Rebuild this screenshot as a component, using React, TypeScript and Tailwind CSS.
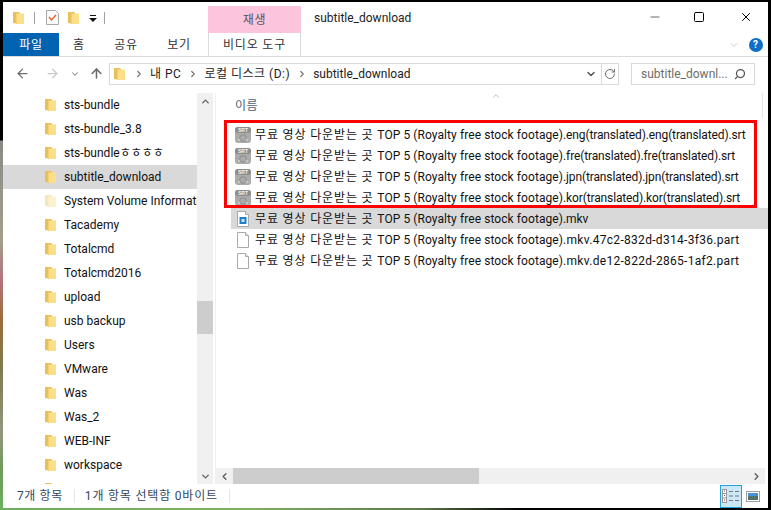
import { ChevronDown, ChevronUp, ArrowLeft, ArrowRight, ArrowUp, ChevronRight, ChevronLeft, RotateCw, Search, Minus, X, Square } from "lucide-react";

const font = "font-['Roboto','Noto_Sans_CJK_KR',sans-serif]";

const folders = [
  "sts-bundle",
  "sts-bundle_3.8",
  "sts-bundleㅎㅎㅎㅎ",
  "subtitle_download",
  "System Volume Information",
  "Tacademy",
  "Totalcmd",
  "Totalcmd2016",
  "upload",
  "usb backup",
  "Users",
  "VMware",
  "Was",
  "Was_2",
  "WEB-INF",
  "workspace",
];

const base = "TOP 5 (Royalty free stock footage)";

const srtFiles = [
  `.eng(translated).eng(translated).srt`,
  `.fre(translated).fre(translated).srt`,
  `.jpn(translated).jpn(translated).srt`,
  `.kor(translated).kor(translated).srt`,
];

function Folder({ faded = false }: { faded?: boolean }) {
  return (
    <svg width="11" height="14" viewBox="0 0 11 14" className={`shrink-0 ${faded ? "opacity-40" : ""}`}>
      <path d="M0 1h6l1 1v11l-7-1z" fill="#e8bf58" />
      <path d="M3 2.5h8V13H3z" fill="#fbdf8b" />
      <path d="M3 2.5h1V13H3z" fill="#f6cf6c" />
    </svg>
  );
}

function SrtIcon() {
  return (
    <svg width="16" height="16" viewBox="0 0 16 16" className="shrink-0">
      <rect x="0" y="0" width="16" height="16" rx="3" fill="#ababab" />
      <rect x="0" y="0" width="16" height="6" rx="3" fill="#8c8c8c" />
      <text x="8" y="5" textAnchor="middle" fontSize="5" fontWeight="700" fill="#f4f4f4" fontFamily="Liberation Sans">
        SRT
      </text>
      <circle cx="8" cy="11" r="3.2" fill="none" stroke="#939393" strokeWidth="1.2" />
      <circle cx="4" cy="13" r="1.3" fill="#c4c4c4" />
      <circle cx="12" cy="13" r="1.3" fill="#c4c4c4" />
    </svg>
  );
}

function BlankFile({ video = false }: { video?: boolean }) {
  return (
    <svg width="12" height="16" viewBox="0 0 12 16" className="shrink-0">
      <path d="M.5.5h8l3 3v12H.5z" fill="#fff" stroke="#a9a9a9" />
      <path d="M8.5.5v3h3" fill="#eee" stroke="#a9a9a9" />
      {video && <rect x="2.5" y="6" width="7" height="7" fill="#1e7fd0" />}
      {video && <rect x="4.5" y="8" width="3" height="3" fill="#cfe6f8" />}
    </svg>
  );
}

function FileRow({ tail, icon, wide = false, selected = false }: { tail: string; icon: React.ReactNode; wide?: boolean; selected?: boolean }) {
  return (
    <div className={`flex h-[21px] items-center whitespace-nowrap pl-[2px] ${selected ? "bg-[#d9d9d9]" : ""}`}>
      <span className="flex w-[20px] justify-center">{icon}</span>
      <span className="ml-[2px] text-[12px] text-[#111]">
        <span className="tracking-[0.85px]">무료 영상 다운받는 곳 </span>
        <span className="tracking-[0.08px]">{base}</span>
        <span className={wide ? "tracking-[0.3px]" : "tracking-[-0.13px]"}>{tail}</span>
      </span>
    </div>
  );
}

export default function App() {
  return (
    <div className={`flex h-[510px] w-[771px] flex-col overflow-hidden bg-black ${font}`}>
      <div className="flex min-h-0 flex-1">
        <div className="w-[3px] shrink-0 bg-[linear-gradient(to_bottom,#000_0,#000_140px,#8a8a86_141px,#a39f8c_240px,#b2747c_280px,#9b6c3a_320px,#7f7a50_370px,#93967e_430px,#6f9a5c_470px,#6db060_508px)]" />
        <div className="mt-[2px] flex min-w-0 flex-1 flex-col bg-white">
          {/* Title bar */}
          <div className="flex h-[31px] shrink-0 items-end">
            <div className="flex h-[31px] w-[205px] items-center">
              <span className="ml-[10px]">
                <Folder />
              </span>
              <span className="ml-[10px] h-[12px] w-px bg-[#a0a0a0]" />
              <svg width="13" height="15" viewBox="0 0 13 15" className="ml-[11px]">
                <path d="M.5.5h9l3 3v11H.5z" fill="#fafafa" stroke="#a8a8a8" />
                <path d="M3 7l2.5 3L10 5" fill="none" stroke="#e8622a" strokeWidth="1.4" />
              </svg>
              <span className="ml-[9px]">
                <Folder />
              </span>
              <svg width="9" height="8" viewBox="0 0 9 8" className="ml-[10px] mt-[2px]">
                <path d="M1 0h6v1H1zM0 3h8L4 7z" fill="#111" />
              </svg>
              <span className="ml-[6px] h-[12px] w-px bg-[#a0a0a0]" />
            </div>
            <div className="flex h-[27px] w-[93px] items-center justify-center bg-[#fdc4dd] text-[12px] tracking-[0.8px] text-[#555]">재생</div>
            <div className="flex h-[31px] flex-1 items-center pl-[13px] text-[12px] text-[#222]">subtitle_download</div>
            <div className="flex h-[31px] items-center pb-[1px]">
              <Minus size={14} strokeWidth={1} className="mr-[31px] text-black" />
              <Square size={12} strokeWidth={1} absoluteStrokeWidth className="mr-[34px] text-black" />
              <X size={14} strokeWidth={1} absoluteStrokeWidth className="mr-[15px] text-black" />
            </div>
          </div>
          {/* Ribbon tabs */}
          <div className="flex h-[24px] shrink-0 border-b border-[#dadbdc] text-[12px] tracking-[0.8px] text-[#333]">
            <div className="flex h-[23px] w-[56px] items-center justify-center bg-[#0063b1] text-white">파일</div>
            <div className="flex w-[40px] items-center justify-center">홈</div>
            <div className="flex w-[54px] items-center justify-center">공유</div>
            <div className="mr-[3px] flex w-[52px] items-center justify-center">보기</div>
            <div className="flex h-[23px] w-[93px] items-center justify-center border-x border-[#dadbdc]">비디오 도구</div>
            <div className="flex flex-1 items-center justify-end gap-[9px] pr-[5px]">
              <ChevronDown size={12} strokeWidth={1} className="text-[#9a9a9a]" />
              <span className="flex h-[14px] w-[14px] items-center justify-center rounded-full bg-[#0f6fc6] text-[10px] font-bold text-white">?</span>
            </div>
          </div>
          {/* Navigation row */}
          <div className="flex h-[33px] shrink-0 items-center text-[12px]">
            <ArrowLeft size={15} strokeWidth={2} className="ml-[12px] text-[#6d6d6d]" />
            <ArrowRight size={15} strokeWidth={2} className="ml-[15px] text-[#c9c9c9]" />
            <ChevronDown size={10} strokeWidth={2.5} className="ml-[10px] text-[#8a8a8a]" />
            <ArrowUp size={15} strokeWidth={2.5} className="ml-[9px] text-[#6d6d6d]" />
            <div className="ml-[5px] flex h-[22px] w-[510px] items-center border border-[#d9d9d9]">
              <span className="ml-[4px]">
                <Folder />
              </span>
              <ChevronRight size={10} strokeWidth={3} className="ml-[9px] text-[#777]" />
              <span className="ml-[6px] tracking-[0.5px] text-[#222]">내 PC</span>
              <ChevronRight size={10} strokeWidth={3} className="ml-[7px] text-[#777]" />
              <span className="ml-[6px] tracking-[0.5px] text-[#222]">로컬 디스크 (D:)</span>
              <ChevronRight size={10} strokeWidth={3} className="ml-[7px] text-[#777]" />
              <span className="ml-[6px] text-[#222]">subtitle_download</span>
              <ChevronDown size={12} strokeWidth={3} className="ml-auto mr-[4px] text-[#555]" />
              <span className="flex h-full w-[17px] items-center justify-center border-l border-[#d9d9d9]">
                <RotateCw size={12} strokeWidth={2} className="text-[#6d6d6d]" />
              </span>
            </div>
            <div className="ml-[12px] flex h-[22px] w-[124px] items-center border border-[#d9d9d9] pl-[9px] text-[#6d6d6d]">
              <span>subtitle_downl...</span>
              <Search size={12} strokeWidth={2.5} className="ml-auto mr-[8px] -scale-x-100 text-[#555]" />
            </div>
          </div>
          {/* Main */}
          <div className="flex min-h-0 flex-1 pt-[3px]">
            <div className="min-h-0 w-[194px] shrink-0 overflow-hidden">
              {folders.map((f) => (
                <div
                  key={f}
                  className={`flex h-[24px] items-center whitespace-nowrap pl-[42px] text-[12px] text-[#111] ${
                    f === "subtitle_download" ? "bg-[#d9d9d9]" : ""
                  }`}
                >
                  <Folder faded={f.startsWith("System")} />
                  <span className="ml-[8px]">{f}</span>
                </div>
              ))}
              {/* next folder, only its top shows above the status bar */}
              <div className="flex h-[7px] overflow-hidden pl-[42px] pt-[5px]">
                <Folder />
              </div>
            </div>
            <div className="flex w-[16px] shrink-0 flex-col bg-[#f0f0f0]">
              <div className="flex h-[16px] items-center justify-center">
                <ChevronUp size={11} strokeWidth={3} className="text-[#606060]" />
              </div>
              <div className="mt-[192px] h-[33px] bg-[#cdcdcd]" />
              <div className="mt-auto flex h-[16px] items-center justify-center">
                <ChevronDown size={11} strokeWidth={3} className="text-[#606060]" />
              </div>
            </div>
            <div className="ml-[2px] flex min-w-0 flex-1 flex-col border-l border-[#f0f0f0]">
              <div className="min-h-0 flex-1 overflow-hidden">
                <div className="relative flex h-[25px] items-end pb-[3px] pl-[19px] text-[12px] tracking-[0.5px] text-[#4c607a]">
                  이름
                  <ChevronUp size={10} strokeWidth={1} className="absolute left-[275px] top-[-2px] text-[#666]" />
                  <span className="absolute right-[5px] top-0 h-[25px] w-px bg-[#e5e5e5]" />
                </div>
                <div className="relative ml-[15px] mt-[6px]">
                  <div className="absolute left-[-7px] top-[-4px] h-[88px] w-[533px] border-[3px] border-[#ff0000]" />
                  {srtFiles.map((n) => (
                    <FileRow key={n} tail={n} icon={<SrtIcon />} />
                  ))}
                  <FileRow tail=".mkv" icon={<BlankFile video />} selected />
                  <FileRow tail=".mkv.47c2-832d-d314-3f36.part" wide icon={<BlankFile />} />
                  <FileRow tail=".mkv.de12-822d-2865-1af2.part" wide icon={<BlankFile />} />
                </div>
              </div>
              <div className="mr-[3px] flex h-[16px] shrink-0 bg-[#f0f0f0]">
                <div className="flex w-[17px] items-center justify-center">
                  <ChevronLeft size={11} strokeWidth={3} className="text-[#606060]" />
                </div>
                <div className="w-[246px] bg-[#cdcdcd]" />
                <div className="ml-auto flex w-[17px] items-center justify-center">
                  <ChevronRight size={11} strokeWidth={3} className="text-[#606060]" />
                </div>
              </div>
            </div>
          </div>
          {/* Status bar */}
          <div className="flex h-[24px] shrink-0 items-center text-[12px] text-[#33475f]">
            <span className="ml-[14px] tracking-[0.6px]">7개 항목</span>
            <span className="ml-[11px] h-[14px] w-px bg-[#e5e5e5]" />
            <span className="ml-[10px] tracking-[0.8px]">1개 항목 선택함 0바이트</span>
            <span className="ml-[11px] h-[14px] w-px bg-[#e5e5e5]" />
            <div className="ml-auto flex h-[23px] w-[22px] items-center justify-center border border-[#26a0da] bg-[#cbe8f6]">
              <svg width="18" height="14" viewBox="0 0 18 14">
                <rect x=".5" y=".5" width="4" height="13" fill="#fff" stroke="#999" />
                <path d="M0 4.5h5M0 9h5" stroke="#999" />
                <path d="M2 2h1M2 6.5h1" stroke="#666" />
                <path d="M2 11h1" stroke="#c33" />
                <path d="M7 2.5h4M13 2.5h4M7 7h4M13 7h4M7 11.5h4M13 11.5h4" stroke="#777" />
              </svg>
            </div>
            <svg width="14" height="11" viewBox="0 0 14 11" className="ml-[4px] mr-[8px]">
              <rect x=".5" y=".5" width="13" height="10" fill="#fff" stroke="#a0a0a0" />
              <rect x="2" y="2" width="10" height="3" fill="#4a90d9" />
              <rect x="2" y="5" width="10" height="4" fill="#54706a" />
            </svg>
          </div>
        </div>
        <div className="w-[3px] shrink-0 bg-black" />
      </div>
      <div className="h-[2px] shrink-0 bg-[linear-gradient(to_right,#6db060_0,#7fae62_250px,#5d7a48_420px,#000_520px)]" />
    </div>
  );
}
